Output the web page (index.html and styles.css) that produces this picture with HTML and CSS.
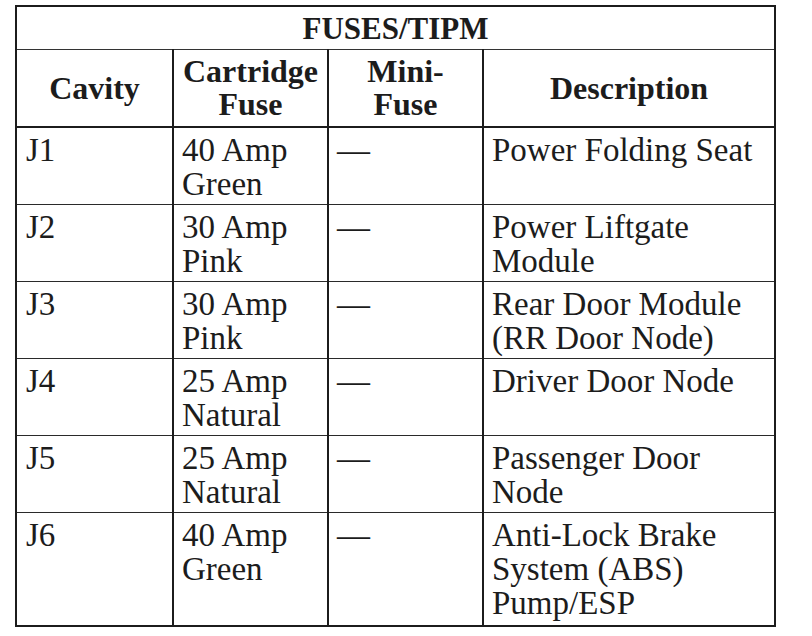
FILE: index.html
```html
<!DOCTYPE html>
<html>
<head>
<meta charset="utf-8">
<link rel="stylesheet" href="styles.css">
</head>
<body>
<table class="fuses">
  <colgroup>
    <col class="c-cav">
    <col class="c-cart">
    <col class="c-mini">
    <col class="c-desc">
  </colgroup>
  <thead>
    <tr class="title-row"><th colspan="4" class="title">FUSES/TIPM</th></tr>
    <tr class="head-row">
      <th>Cavity</th>
      <th>Cartridge<br>Fuse</th>
      <th>Mini-<br>Fuse</th>
      <th>Description</th>
    </tr>
  </thead>
  <tbody>
    <tr class="row"><td>J1</td><td>40 Amp<br>Green</td><td>—</td><td>Power Folding Seat</td></tr>
    <tr class="row"><td>J2</td><td>30 Amp<br>Pink</td><td>—</td><td>Power Liftgate<br>Module</td></tr>
    <tr class="row"><td>J3</td><td>30 Amp<br>Pink</td><td>—</td><td>Rear Door Module<br>(RR Door Node)</td></tr>
    <tr class="row"><td>J4</td><td>25 Amp<br>Natural</td><td>—</td><td>Driver Door Node</td></tr>
    <tr class="row"><td>J5</td><td>25 Amp<br>Natural</td><td>—</td><td>Passenger Door<br>Node</td></tr>
    <tr class="row last"><td>J6</td><td>40 Amp<br>Green</td><td>—</td><td>Anti-Lock Brake<br>System (ABS)<br>Pump/ESP</td></tr>
  </tbody>
</table>
</body>
</html>
```

FILE: styles.css
```css
html, body {
  margin: 0;
  padding: 0;
  background: #ffffff;
}

body {
  padding: 5px 0 0 15px;
  color: #1c1c1c;
  font-family: "Liberation Serif", "Times New Roman", serif;
}

.fuses {
  border-collapse: collapse;
  table-layout: fixed;
  width: 759px;
  border: 2px solid #1c1c1c;
}

.c-cav { width: 157px; }
.c-cart { width: 155px; }
.c-mini { width: 155px; }
.c-desc { width: 292px; }

.fuses th {
  font-weight: bold;
  font-size: 32px;
  line-height: 33px;
  text-align: center;
  vertical-align: middle;
  padding: 0;
  border-left: 2px solid #1c1c1c;
  border-right: 2px solid #1c1c1c;
}

.fuses .title {
  font-size: 31px;
  height: 42px;
  border-bottom: 1px solid #333;
}

.head-row th {
  height: 76px;
  border-bottom: 2px solid #1c1c1c;
}

.fuses td {
  font-size: 33px;
  line-height: 34px;
  vertical-align: top;
  padding: 5px 6px 0 8px;
  height: 72px;
  box-sizing: border-box;
  border-left: 2px solid #1c1c1c;
  border-right: 2px solid #1c1c1c;
  border-bottom: 1px solid #2a2a2a;
}

.fuses td:first-child {
  padding-left: 9px;
}

.row td { height: 77px; }
.row.last td { height: 114px; border-bottom: 2px solid #1c1c1c; }
```
